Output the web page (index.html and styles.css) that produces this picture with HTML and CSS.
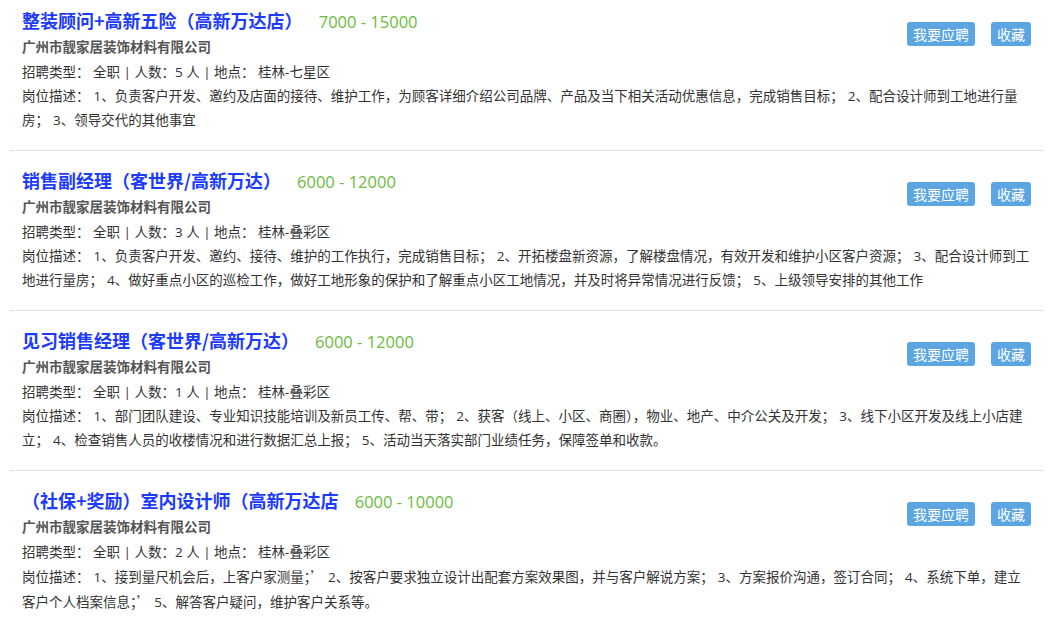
FILE: index.html
```html
<!DOCTYPE html>
<html lang="zh-CN">
<head>
<meta charset="UTF-8">
<title>招聘职位</title>
<link rel="stylesheet" href="styles.css">
</head>
<body>

<div class="jobs">

<div class="job">
 <div class="job-head">
  <div class="job-info">
   <h3 class="title">整装顾问+高新五险（高新万达店） <span class="salary">7000 - 15000</span></h3>
   <div class="company">广州市靓家居装饰材料有限公司</div>
   <div class="meta">招聘类型： 全职 | 人数：5 人 | 地点： 桂林-七星区</div>
  </div>
  <div class="actions">
   <button class="btn">我要应聘</button>
   <button class="btn">收藏</button>
  </div>
 </div>
 <div class="desc">岗位描述： 1、负责客户开发、邀约及店面的接待、维护工作，为顾客详细介绍公司品牌、产品及当下相关活动优惠信息，完成销售目标； 2、配合设计师到工地进行量房； 3、领导交代的其他事宜</div>
</div>

<div class="job">
 <div class="job-head">
  <div class="job-info">
   <h3 class="title">销售副经理（客世界/高新万达） <span class="salary">6000 - 12000</span></h3>
   <div class="company">广州市靓家居装饰材料有限公司</div>
   <div class="meta">招聘类型： 全职 | 人数：3 人 | 地点： 桂林-叠彩区</div>
  </div>
  <div class="actions">
   <button class="btn">我要应聘</button>
   <button class="btn">收藏</button>
  </div>
 </div>
 <div class="desc">岗位描述： 1、负责客户开发、邀约、接待、维护的工作执行，完成销售目标； 2、开拓楼盘新资源，了解楼盘情况，有效开发和维护小区客户资源； 3、配合设计师到工地进行量房； 4、做好重点小区的巡检工作，做好工地形象的保护和了解重点小区工地情况，并及时将异常情况进行反馈； 5、上级领导安排的其他工作</div>
</div>

<div class="job">
 <div class="job-head">
  <div class="job-info">
   <h3 class="title">见习销售经理（客世界/高新万达） <span class="salary">6000 - 12000</span></h3>
   <div class="company">广州市靓家居装饰材料有限公司</div>
   <div class="meta">招聘类型： 全职 | 人数：1 人 | 地点： 桂林-叠彩区</div>
  </div>
  <div class="actions">
   <button class="btn">我要应聘</button>
   <button class="btn">收藏</button>
  </div>
 </div>
 <div class="desc">岗位描述： 1、部门团队建设、专业知识技能培训及新员工传、帮、带； 2、获客（线上、小区、商圈），物业、地产、中介公关及开发； 3、线下小区开发及线上小店建立； 4、检查销售人员的收楼情况和进行数据汇总上报； 5、活动当天落实部门业绩任务，保障签单和收款。</div>
</div>

<div class="job">
 <div class="job-head">
  <div class="job-info">
   <h3 class="title">（社保+奖励）室内设计师（高新万达店 <span class="salary">6000 - 10000</span></h3>
   <div class="company">广州市靓家居装饰材料有限公司</div>
   <div class="meta">招聘类型： 全职 | 人数：2 人 | 地点： 桂林-叠彩区</div>
  </div>
  <div class="actions">
   <button class="btn">我要应聘</button>
   <button class="btn">收藏</button>
  </div>
 </div>
 <div class="desc">岗位描述： 1、接到量尺机会后，上客户家测量；<span class="cjk">’</span> 2、按客户要求独立设计出配套方案效果图，并与客户解说方案； 3、方案报价沟通，签订合同； 4、系统下单，建立客户个人档案信息；<span class="cjk">’</span> 5、解答客户疑问，维护客户关系等。</div>
</div>

</div>

</body>
</html>
```

FILE: styles.css
```css
body{margin:0;background:#fff;font-family:"Open Sans","Microsoft YaHei","Noto Sans CJK SC",sans-serif;color:#333}
.jobs{padding:0 8px 0 10px}
.job{padding:16px 12px 18px 12px;border-bottom:1px dotted #c8c8c8}
.job:first-child{padding-top:7px}
.job-head{display:flex;justify-content:space-between;align-items:flex-start}
.title{margin:0;font-family:"Noto Sans CJK SC",sans-serif;font-size:18px;line-height:26px;font-weight:700;color:#1c3bff}
.salary{margin-left:12px;font-family:"Open Sans",sans-serif;font-size:16.5px;font-weight:400;color:#6cbb3c}
.company{font-size:13.5px;line-height:25px;font-weight:700;color:#555}
.meta{font-size:13.5px;line-height:24px;color:#333}
.desc{width:1009px;font-size:13.5px;line-height:24px;color:#333;word-spacing:0.5px}
.cjk{font-family:"Noto Sans CJK SC",sans-serif}
.actions{display:flex;gap:16px;margin-top:15px}
.btn{height:24px;padding:0 6px;border:none;border-radius:3px;background:#5ca5e3;color:#fff;font-family:"Noto Sans CJK SC",sans-serif;font-size:14px;line-height:24px;cursor:pointer}
```
